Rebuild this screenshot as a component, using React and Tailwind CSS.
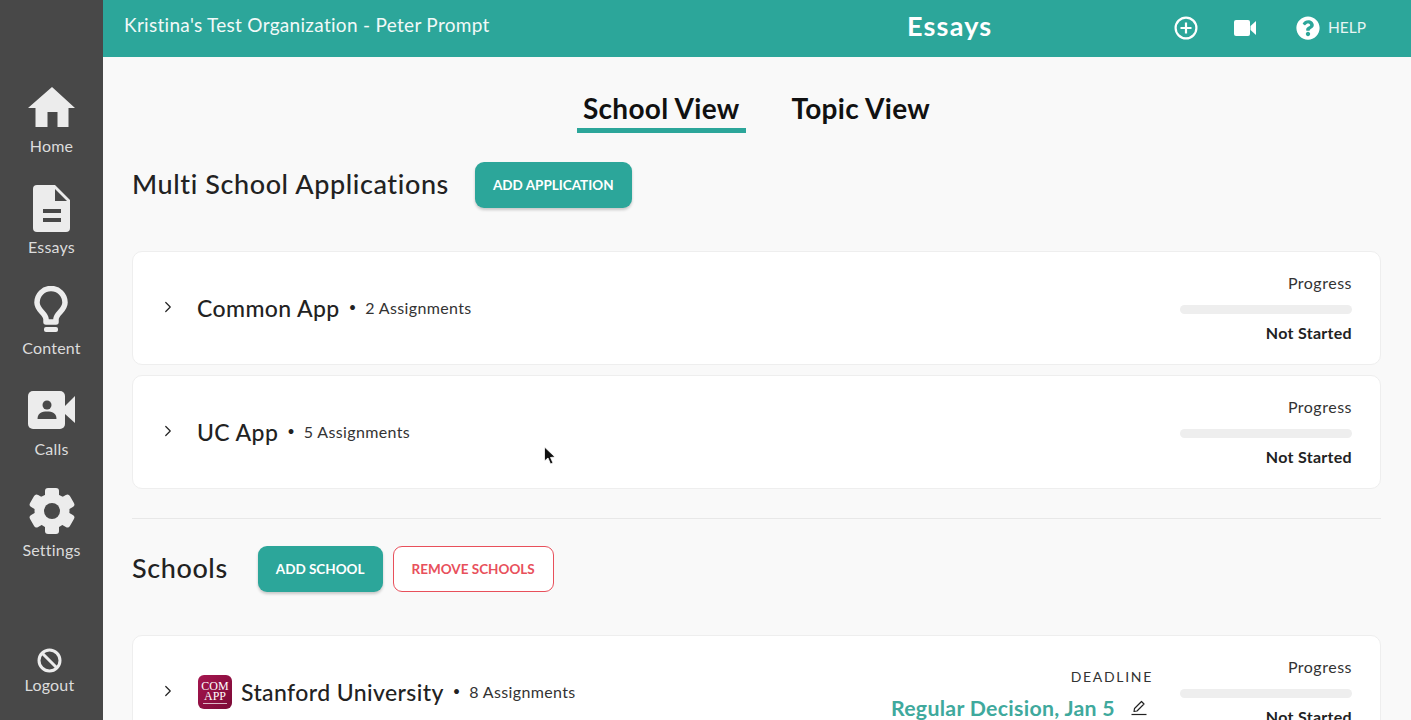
import { FaQuestionCircle } from "react-icons/fa";
import { ChevronRight } from "lucide-react";

const HomeIcon = () => (
  <svg width="48" height="42" viewBox="0 0 48 42" className="text-[#ececec] mt-[2px]">
    <path fill="currentColor" d="M24 0 L47 21 L40.5 21 L40.5 40 L29.5 40 L29.5 25 L19.5 25 L19.5 40 L7.5 40 L7.5 21 L0 21 Z" />
  </svg>
);

const EssayIcon = () => (
  <svg width="38" height="47" viewBox="0 0 38 47">
    <path fill="#ececec" d="M4 0 H22 L37 15 V43 A4 4 0 0 1 33 47 H4 A4 4 0 0 1 0 43 V4 A4 4 0 0 1 4 0 Z" />
    <path fill="#484848" d="M22 4 L34 16 H22 Z" />
    <rect x="10" y="24" width="18" height="4" fill="#484848" />
    <rect x="10" y="33" width="18" height="4" fill="#484848" />
  </svg>
);

const BulbIcon = () => (
  <svg width="34" height="47" viewBox="0 0 34 47" fill="none">
    <path stroke="#ececec" strokeWidth="5.5" d="M12 36 V33 C11.5 27 3 24.5 3 16.5 A14 14 0 0 1 31 16.5 C31 24.5 22.5 27 22 33 V36 Z" strokeLinejoin="round" />
    <rect x="10" y="41" width="14" height="5" rx="2" fill="#ececec" />
  </svg>
);

const CallIcon = () => (
  <svg width="48" height="38" viewBox="0 0 48 38">
    <rect x="0" y="0" width="37" height="38" rx="5" fill="#ececec" />
    <path fill="#ececec" d="M37 15 L47 5 V32 L37 23 Z" />
    <circle cx="19" cy="14" r="4.5" fill="#484848" />
    <path fill="#484848" d="M9.5 28 C9.5 22 14 20.5 19 20.5 C24 20.5 28.5 22 28.5 28 Z" />
  </svg>
);

const GearIcon = () => (
  <svg width="48" height="48" viewBox="0 0 48 48" fill="#ececec">
    <circle cx="24" cy="24" r="17.5" />
    <rect x="17" y="1" width="14" height="46" rx="3" />
    <rect x="17" y="1" width="14" height="46" rx="3" transform="rotate(60 24 24)" />
    <rect x="17" y="1" width="14" height="46" rx="3" transform="rotate(120 24 24)" />
    <circle cx="24" cy="24" r="8" fill="#484848" />
  </svg>
);

const LogoutIcon = () => (
  <svg width="25" height="25" viewBox="0 0 25 25" fill="none" stroke="#ececec" strokeWidth="3">
    <circle cx="12.5" cy="12.5" r="10.5" />
    <path d="M5 5 L20 20" />
  </svg>
);

const PlusCircle = () => (
  <svg width="24" height="24" viewBox="0 0 24 24" fill="none" stroke="white" strokeWidth="2.2">
    <circle cx="12" cy="12" r="10.4" />
    <path d="M12 6.5 V17.5 M6.5 12 H17.5" />
  </svg>
);

const VideoIcon = () => (
  <svg width="23" height="16" viewBox="0 0 23 16" fill="white">
    <rect x="0" y="0" width="16" height="16" rx="2" />
    <path d="M16.5 6 L22 1 V15 L16.5 10 Z" />
  </svg>
);

const PencilIcon = () => (
  <svg width="16" height="17" viewBox="0 0 16 17" fill="none" stroke="#222" strokeWidth="1.2">
    <path d="M3.5 9.5 L10.5 2.5 L13 5 L6 12 L3 12.5 Z" strokeLinejoin="round" />
    <path d="M0.5 15.5 H15.5" />
  </svg>
);

const menu = [
  { label: "Home", icon: <HomeIcon /> },
  { label: "Essays", icon: <EssayIcon /> },
  { label: "Content", icon: <BulbIcon /> },
  { label: "Calls", icon: <CallIcon /> },
  { label: "Settings", icon: <GearIcon /> },
];

function Progress() {
  return (
    <div className="w-[172px] shrink-0 flex flex-col items-end">
      <span className="text-[16px] leading-5 text-[#333] tracking-[0.5px]">Progress</span>
      <div className="w-full h-[9px] mt-3 rounded-full bg-[#eeeeee]" />
      <span className="mt-[9px] text-[16px] leading-5 font-bold text-[#222] tracking-[0.3px]">Not Started</span>
    </div>
  );
}

function Card({ name, count, logo, deadline }) {
  return (
    <div className="h-[114px] shrink-0 flex items-center bg-white rounded-[10px] border border-[#eeeeee] pl-[28px] pr-[28px]">
      <ChevronRight size={18} strokeWidth={1.6} className="text-[#222] -ml-[2px] mt-[-2px] shrink-0" />
      <div className="flex items-center ml-5 flex-1 min-w-0">
        {logo && (
          <div className="relative w-[34px] h-[34px] ml-[1px] mr-[9px] rounded-[6px] bg-gradient-to-br from-[#a5164f] to-[#7c0a36] flex flex-col items-center text-white pt-[6px] font-['Liberation_Serif',serif] text-[12px] leading-[10px]">
            <span>COM</span>
            <span>APP</span>
            <span className="absolute left-[5px] right-[5px] bottom-[5px] h-px bg-white/70" />
          </div>
        )}
        <span className="text-[23px] leading-8 font-medium text-[#222] tracking-[0.4px]">{name}</span>
        <span className="mx-[9px] text-[#222] text-[13px]">•</span>
        <span className="text-[16px] text-[#333] tracking-[0.35px]">{count}</span>
      </div>
      {deadline && (
        <div className="flex flex-col items-end mr-[28px] mt-[4px]">
          <span className="text-[14px] leading-5 tracking-[1.7px] text-[#333] mr-[-1px]">DEADLINE</span>
          <div className="flex items-center mt-[7px] mr-[5px]">
            <span className="text-[21.3px] leading-7 font-bold text-[#3fa99d] tracking-[0.3px]">{deadline}</span>
            <span className="ml-4"><PencilIcon /></span>
          </div>
        </div>
      )}
      <Progress />
    </div>
  );
}

export default function App() {
  return (
    <div className="relative h-screen flex overflow-hidden bg-[#f9f9f9] font-['Lato','Liberation_Sans',sans-serif]">
      <aside className="w-[103px] shrink-0 bg-[#484848] flex flex-col items-center pt-[82px] pb-[25px] text-[#dcdcdc]">
        {menu.map((item) => (
          <div key={item.label} className="h-[101px] shrink-0 flex flex-col items-center">
            <div className="h-[50px] flex items-center justify-center">{item.icon}</div>
            <span className="mt-1 text-[16px] leading-5 tracking-[0.2px]">{item.label}</span>
          </div>
        ))}
        <div className="mt-auto flex flex-col items-center mr-1">
          <LogoutIcon />
          <span className="mt-[2px] text-[16px] leading-5 tracking-[0.2px]">Logout</span>
        </div>
      </aside>

      <div className="flex-1 min-w-0 flex flex-col">
        <header className="h-[57px] shrink-0 bg-[#2ca69a] flex items-center pl-[21px] pr-[45px] text-white">
          <span className="w-[783px] shrink-0 text-[19px] tracking-[0.3px] mt-[-6px] text-[#f1f9f8]">Kristina's Test Organization - Peter Prompt</span>
          <span className="text-[27px] font-bold tracking-[1.2px] mt-[-5px]">Essays</span>
          <div className="ml-auto flex items-center mt-[-2px]">
            <PlusCircle />
            <span className="ml-[36px]"><VideoIcon /></span>
            <FaQuestionCircle size={24} className="ml-[39px]" />
            <span className="ml-2 text-[15.5px] text-[#e8f5f3]">HELP</span>
          </div>
        </header>

        <main className="flex-1 min-h-0 overflow-hidden pl-[29px] pr-[30px]">
          <div className="flex justify-center gap-[40px] mt-[33px]">
            <div className="px-[6px] pb-[2px] border-b-[5px] border-[#2ca69a] text-[28px] leading-9 font-bold text-[#111] tracking-[0.3px]">School View</div>
            <div className="px-[6px] pb-[2px] text-[28px] leading-9 font-bold text-[#111] tracking-[0.3px]">Topic View</div>
          </div>

          <div className="flex items-center mt-[29px]">
            <h2 className="text-[27px] leading-9 font-medium text-[#222] tracking-[0.6px] mt-[-2px]">Multi School Applications</h2>
            <button className="ml-[26px] h-[46px] px-[18px] rounded-[9px] bg-[#2ca69a] shadow-[0_2px_3px_rgba(0,0,0,0.2)] text-white text-[13.5px] font-bold">ADD APPLICATION</button>
          </div>

          <div className="mt-[43px] flex flex-col gap-[10px]">
            <Card name="Common App" count="2 Assignments" />
            <Card name="UC App" count="5 Assignments" />
          </div>

          <div className="mt-[29px] border-t border-[#e8e8e8]" />

          <div className="flex items-center mt-[27px]">
            <h2 className="text-[27px] leading-9 font-medium text-[#222] tracking-[0.6px] mt-[-2px]">Schools</h2>
            <button className="ml-[30px] h-[46px] px-[18px] rounded-[9px] bg-[#2ca69a] shadow-[0_2px_3px_rgba(0,0,0,0.2)] text-white text-[13.5px] font-bold">ADD SCHOOL</button>
            <button className="ml-[10px] h-[46px] px-[18px] rounded-[9px] bg-white border border-[#e8505b] text-[#e8505b] text-[13.5px] font-bold">REMOVE SCHOOLS</button>
          </div>

          <div className="mt-[43px]">
            <Card name="Stanford University" count="8 Assignments" logo deadline="Regular Decision, Jan 5" />
          </div>
        </main>
      </div>

      {/* mouse pointer from the recording */}
      <svg width="14" height="20" viewBox="0 0 14 20" className="absolute left-[543px] top-[446px]">
        <path d="M1.5 1 V15 L5 12 L7.5 18 L10 17 L7.5 11.5 L12 11 Z" fill="#111" stroke="white" strokeWidth="0.8" />
      </svg>
    </div>
  );
}
